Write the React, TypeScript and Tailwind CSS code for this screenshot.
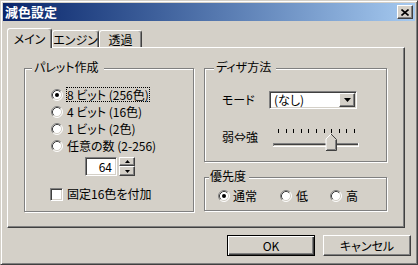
import type { ReactNode } from "react";

// classic 3D edges
const raised =
  "border border-t-white border-l-white border-r-[#404040] border-b-[#404040] shadow-[inset_-1px_-1px_0_#808080]";
const sunken =
  "border border-t-[#808080] border-l-[#808080] border-r-white border-b-white shadow-[inset_1px_1px_0_#404040,inset_-1px_-1px_0_#d4d0c8]";
const tabEdge =
  "border-t border-l border-r border-t-white border-l-white border-r-[#404040] rounded-t-[3px] shadow-[inset_-1px_0_0_#808080]";

function Radio({ checked }: { checked?: boolean }) {
  return (
    <svg width="12" height="12" viewBox="0 0 12 12" className="shrink-0">
      <circle cx="6" cy="6" r="5" fill="#fff" />
      <path d="M2.11 9.89A5.5 5.5 0 0 1 9.89 2.11" fill="none" stroke="#808080" />
      <path d="M9.89 2.11A5.5 5.5 0 0 1 2.11 9.89" fill="none" stroke="#fff" />
      <path d="M2.82 9.18A4.5 4.5 0 0 1 9.18 2.82" fill="none" stroke="#404040" />
      <path d="M9.18 2.82A4.5 4.5 0 0 1 2.82 9.18" fill="none" stroke="#d4d0c8" />
      {checked && <circle cx="6" cy="6" r="2" fill="#000" />}
    </svg>
  );
}

function Group({ label, labelClass, className, children }: { label: string; labelClass: string; className: string; children?: ReactNode }) {
  return (
    <div className={`relative border border-[#808080] shadow-[inset_1px_1px_0_#fff,1px_1px_0_#fff] ${className}`}>
      <span className={`absolute -top-[9px] bg-[#d4d0c8] leading-[14px] whitespace-nowrap ${labelClass}`}>{label}</span>
      {children}
    </div>
  );
}

function Trackbar() {
  const ticks = Array.from({ length: 11 }, (_, i) => Math.round(7 + i * 7.6));
  return (
    <svg width="90" height="22" viewBox="0 0 90 22" shapeRendering="crispEdges">
      {ticks.map((x) => (
        <rect key={x} x={x} y={0} width={1} height={4} fill="#000" />
      ))}
      <rect x={2} y={14} width={86} height={4} fill="#d4d0c8" />
      <rect x={2} y={14} width={86} height={1} fill="#808080" />
      <rect x={3} y={15} width={84} height={1} fill="#404040" />
      <rect x={2} y={14} width={1} height={4} fill="#808080" />
      <rect x={2} y={17} width={86} height={1} fill="#fff" />
      <rect x={87} y={14} width={1} height={4} fill="#fff" />
      {/* thumb, pointing up */}
      <polygon points="55,10 60,5 65,10 65,21 55,21" fill="#d4d0c8" />
      <polyline points="55,21 55,10 60,5" fill="none" stroke="#fff" shapeRendering="auto" />
      <polyline points="60,5 65.5,10.5 65.5,21.5 55,21.5" fill="none" stroke="#404040" shapeRendering="auto" />
      <polyline points="64.5,11 64.5,20.5 56,20.5" fill="none" stroke="#808080" shapeRendering="auto" />
    </svg>
  );
}

export default function App() {
  return (
    <div className="w-[418px] h-[265px] bg-[#d4d0c8] border border-t-[#d4d0c8] border-l-[#d4d0c8] border-r-[#404040] border-b-[#404040] shadow-[inset_1px_1px_0_#fff,inset_-1px_-1px_0_#808080] p-[2px] font-['Noto_Sans_CJK_JP',sans-serif] text-[12px] leading-[14px] text-black [font-feature-settings:'palt'] select-none">
      <div className="h-[18px] flex items-center justify-between px-[2px] bg-linear-to-r from-[#0a246a] to-[#a6caf0]">
        <span className="text-white font-bold text-[13px] leading-[18px]">減色設定</span>
        <div className={`w-[16px] h-[14px] bg-[#d4d0c8] flex items-center justify-center ${raised}`}>
          <svg width="8" height="7" viewBox="0 0 8 7">
            <path d="M0.5 0.5L7.5 6.5M7.5 0.5L0.5 6.5" stroke="#000" strokeWidth="1.6" />
          </svg>
        </div>
      </div>

      <div className="px-[4px] pt-[7px]">
        <div className="flex items-end h-[19px]">
          <div className={`relative z-10 -mb-px w-[45px] h-[20px] bg-[#d4d0c8] flex items-center justify-center ${tabEdge}`}>メイン</div>
          <div className={`w-[47px] h-[17px] flex items-center justify-center pt-[1px] ${tabEdge}`}>エンジン</div>
          <div className={`w-[43px] h-[17px] flex items-center justify-center pt-[1px] ${tabEdge}`}>透過</div>
        </div>

        <div className={`w-[398px] h-[181px] flex gap-[10px] pl-[16px] pt-[20px] ${raised}`}>
          <Group label="パレット作成" labelClass="left-[7px] pl-[2px] pr-[5px]" className="w-[170px] h-[144px] pl-[26px] pt-[17px]">
            <div className="flex flex-col">
              {[
                ["8 ビット (256色)", true],
                ["4 ビット (16色)", false],
                ["1 ビット (2色)", false],
                ["任意の数 (2-256)", false],
              ].map(([t, on]) => (
                <div key={t as string} className="flex items-center gap-[3px] h-[17px]">
                  <Radio checked={on as boolean} />
                  <span className={`border border-dotted leading-[13px] whitespace-nowrap ${on ? "border-black" : "border-transparent"}`}>{t}</span>
                </div>
              ))}
              <div className="flex items-center mt-[3px] pl-[34px]">
                <div className={`w-[32px] h-[19px] bg-white flex items-center justify-end pr-[4px] ${sunken}`}>64</div>
                <div className="ml-[2px] flex flex-col">
                  <div className={`w-[16px] h-[9px] flex items-center justify-center ${raised}`}>
                    <svg width="5" height="3" viewBox="0 0 5 3"><polygon points="2.5,0 5,3 0,3" fill="#000" /></svg>
                  </div>
                  <div className={`w-[16px] h-[10px] flex items-center justify-center ${raised}`}>
                    <svg width="5" height="3" viewBox="0 0 5 3"><polygon points="0,0 5,0 2.5,3" fill="#000" /></svg>
                  </div>
                </div>
              </div>
              <div className="flex items-center gap-[4px] mt-[11px] -ml-[1px]">
                <div className={`w-[13px] h-[13px] bg-white ${sunken}`} />
                <span>固定16色を付加</span>
              </div>
            </div>
          </Group>

          <div className="flex flex-col gap-[15px]">
            <Group label="ディザ方法" labelClass="left-[9px] pl-[2px] pr-[5px]" className="w-[183px] h-[94px] pl-[17px] pt-[22px]">
              <div className="flex items-center h-[18px]">
                <span className="w-[47px]">モード</span>
                <div className={`w-[88px] h-[18px] bg-white p-[1px] flex ${sunken}`}>
                  <span className="flex-1 pl-[3px] leading-[14px]">(なし)</span>
                  <div className={`w-[16px] h-full bg-[#d4d0c8] flex items-center justify-center ${raised}`}>
                    <svg width="7" height="4" viewBox="0 0 7 4"><polygon points="0,0 7,0 3.5,4" fill="#000" /></svg>
                  </div>
                </div>
              </div>
              <div className="flex items-start mt-[20px]">
                <span className="w-[49px] leading-[16px]">弱⇔強</span>
                <Trackbar />
              </div>
            </Group>

            <Group label="優先度" labelClass="left-[4px] pl-[1px] pr-[3px]" className="w-[183px] h-[34px] pl-[13px] pt-[9px]">
              <div className="flex items-center h-[17px]">
                <div className="w-[62px] flex items-center gap-[3px]">
                  <Radio checked />
                  <span>通常</span>
                </div>
                <div className="w-[50px] flex items-center gap-[4px]">
                  <Radio />
                  <span>低</span>
                </div>
                <div className="flex items-center gap-[4px]">
                  <Radio />
                  <span>高</span>
                </div>
              </div>
            </Group>
          </div>
        </div>

        <div className="flex justify-end gap-[8px] mt-[7px]">
          <button className="w-[88px] h-[21px] border border-black shadow-[inset_1px_1px_0_#fff,inset_-1px_-1px_0_#404040,inset_-2px_-2px_0_#808080] flex items-center justify-center">OK</button>
          <button className={`w-[88px] h-[21px] flex items-center justify-center ${raised}`}>キャンセル</button>
        </div>
      </div>
    </div>
  );
}
